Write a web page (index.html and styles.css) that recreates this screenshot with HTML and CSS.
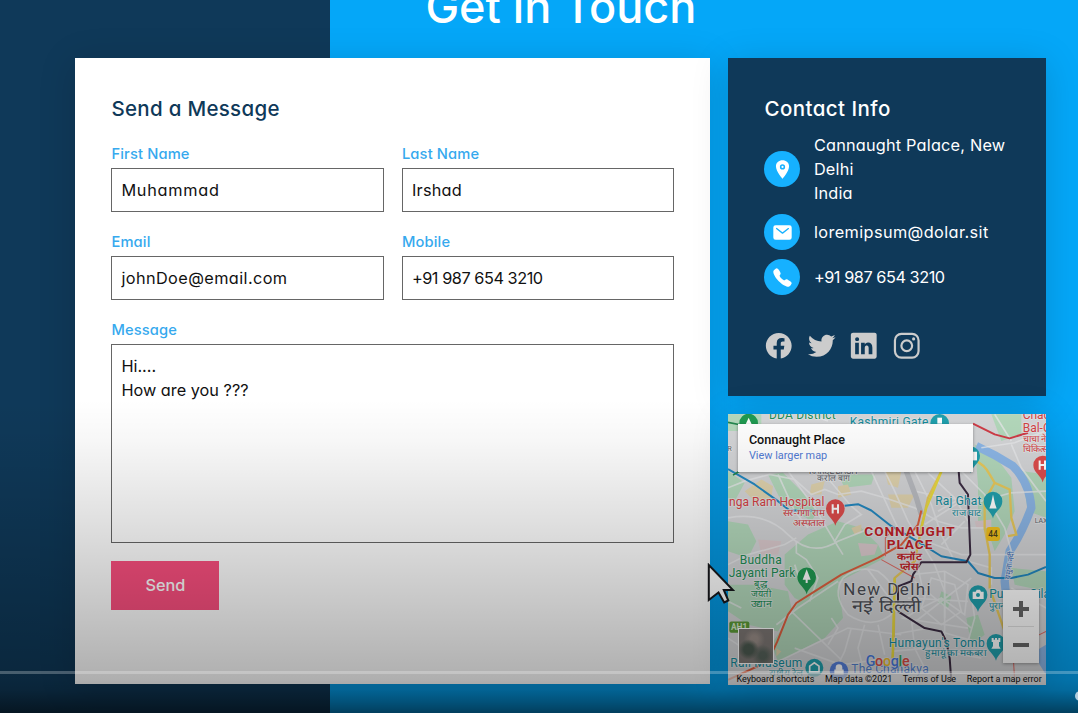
FILE: index.html
```html
<!DOCTYPE html>
<html lang="en">
<head>
<meta charset="utf-8">
<title>Get in Touch</title>
<link rel="stylesheet" href="styles.css">
</head>
<body>
<main class="page">
  <h1 class="title">Get in Touch</h1>
  <div class="columns">
    <form class="card form">
      <h2 class="heading form-heading">Send a Message</h2>
      <div class="fields">
        <label class="field"><span class="label">First Name</span><input class="input ls-first" type="text" value="Muhammad"></label>
        <label class="field"><span class="label">Last Name</span><input class="input ls-last" type="text" value="Irshad"></label>
        <label class="field"><span class="label">Email</span><input class="input ls-email" type="text" value="johnDoe@email.com"></label>
        <label class="field"><span class="label">Mobile</span><input class="input ls-phone" type="text" value="+91 987 654 3210"></label>
        <label class="field wide"><span class="label">Message</span><textarea class="input area">Hi....
How are you ???</textarea></label>
      </div>
      <button class="send" type="button">Send</button>
    </form>
    <div class="side">
      <section class="card info">
        <h2 class="heading info-heading">Contact Info</h2>
        <ul class="contacts">
          <li><span class="badge"><svg viewBox="0 0 512 512"><path d="M256 32C167.67 32 96 96.51 96 176c0 128 160 304 160 304s160-176 160-304c0-79.49-71.67-144-160-144zm0 224a64 64 0 1164-64 64.07 64.07 0 01-64 64z"/><circle cx="256" cy="192" r="26"/></svg></span><span class="address">Cannaught Palace, New<br>Delhi<br>India</span></li>
          <li><span class="badge"><svg viewBox="0 0 512 512"><path d="M424 80H88a56.06 56.06 0 00-56 56v240a56.06 56.06 0 0056 56h336a56.06 56.06 0 0056-56V136a56.06 56.06 0 00-56-56zm-14.18 92.63l-144 112a16 16 0 01-19.64 0l-144-112a16 16 0 1119.64-25.26L256 251.73l134.18-104.36a16 16 0 0119.64 25.26z"/></svg></span><span class="mail">loremipsum@dolar.sit</span></li>
          <li><span class="badge"><svg viewBox="0 0 512 512"><path d="M391 480c-19.52 0-46.94-7.06-88-30-49.93-28-88.55-53.85-138.21-103.38C116.91 298.77 93.61 267.79 61 208.45c-36.84-67-30.56-102.12-23.54-117.13C45.82 73.38 58.16 62.65 74.11 52a176.3 176.3 0 0128.64-15.2c1-.43 1.93-.84 2.76-1.21 4.95-2.23 12.45-5.6 21.95-2 6.34 2.38 12 7.25 20.86 16 18.17 17.92 43 57.83 52.16 77.43 6.15 13.21 10.22 21.93 10.23 31.71 0 11.45-5.76 20.28-12.75 29.81-1.31 1.79-2.61 3.5-3.87 5.16-7.61 10-9.28 12.89-8.18 18.05 2.23 10.37 18.86 41.24 46.19 68.51s57.31 42.85 67.72 45.07c5.38 1.15 8.33-.59 18.65-8.47 1.48-1.13 3-2.3 4.59-3.47 10.66-7.93 19.08-13.54 30.26-13.54h.06c9.73 0 18.06 4.22 31.86 11.18 18 9.08 59.11 33.59 77.14 51.78 8.77 8.84 13.66 14.48 16.05 20.81 3.6 9.53.21 17-2 22-.37.83-.78 1.74-1.21 2.75a176.49 176.49 0 01-15.29 28.58c-10.63 15.9-21.4 28.21-39.38 36.58A67.42 67.42 0 01391 480z"/></svg></span><span class="phone">+91 987 654 3210</span></li>
        </ul>
        <nav class="social">
          <svg viewBox="0 0 512 512"><path d="M480 257.35c0-123.7-100.3-224-224-224s-224 100.3-224 224c0 111.8 81.9 204.47 189 221.29V322.12h-56.89v-64.77H221V208c0-56.13 33.45-87.16 84.61-87.16 24.51 0 50.15 4.38 50.15 4.38v55.13H327.5c-27.81 0-36.51 17.26-36.51 35v42h62.12l-9.92 64.77H291v156.54c107.1-16.81 189-109.48 189-221.31z"/></svg>
          <svg viewBox="0 0 512 512"><path d="M496 109.5a201.8 201.8 0 01-56.55 15.3 97.51 97.51 0 0043.33-53.6 197.74 197.74 0 01-62.56 23.5A99.14 99.14 0 00348.31 64c-54.42 0-98.46 43.4-98.46 96.9a93.21 93.21 0 002.54 22.1 280.7 280.7 0 01-203-101.3A95.69 95.69 0 0036 130.4c0 33.6 17.53 63.3 44 80.7A97.5 97.5 0 0135.22 199v1.2c0 47 34 86.1 79 95a100.76 100.76 0 01-25.94 3.4 94.38 94.38 0 01-18.51-1.8c12.51 38.5 48.92 66.5 92.05 67.3A199.59 199.59 0 0139.5 405.6a203 203 0 01-23.5-1.4A278.68 278.68 0 00166.74 448c181.36 0 280.44-147.7 280.44-275.8 0-4.2-.11-8.4-.31-12.5A198.48 198.48 0 00496 109.5z"/></svg>
          <svg viewBox="0 0 512 512"><path d="M444.17 32H70.28C49.85 32 32 46.7 32 66.89v374.72C32 461.91 49.85 480 70.28 480h373.78c20.54 0 35.94-18.21 35.94-38.39V66.89C480.12 46.7 464.6 32 444.17 32zm-273.3 373.43h-64.18V205.88h64.18zM141 175.54h-.46c-20.54 0-33.84-15.29-33.84-34.43 0-19.49 13.65-34.42 34.65-34.42s33.85 14.82 34.31 34.42c-.01 19.14-13.31 34.43-34.66 34.43zm264.43 229.89h-64.18V296.32c0-26.14-9.34-44-32.56-44-17.74 0-28.24 12-32.91 23.69-1.75 4.2-2.22 9.92-2.22 15.76v113.66h-64.18V205.88h64.18v27.77c9.34-13.3 23.93-32.44 57.88-32.44 42.13 0 74 27.77 74 87.64z"/></svg>
          <svg viewBox="0 0 512 512"><rect class="ring" x="51" y="51" width="410" height="410" rx="112"/><circle class="ring" cx="256" cy="256" r="93"/><circle cx="375" cy="137" r="27"/></svg>
        </nav>
      </section>
      <section class="card map">
        <svg class="map-art" viewBox="0 9 954 810" preserveAspectRatio="none">
          <rect width="954" height="830" fill="#d4d5d7"/>
          <g fill="#b3d8bb">
            <path d="M0 180L50 215 20 270 0 260zM120 190L165 185 230 250 270 300 250 330 160 270zM0 330L60 340 85 390 60 440 0 420zM170 430L240 370 330 330 400 350 450 400 470 440 220 570 200 560 170 520zM130 700L210 575 330 510 345 620 290 680 150 750zM0 520L80 520 180 540 190 590 150 660 60 640 0 600z"/>
            <path d="M740 100L790 120 850 200 860 300 830 370 800 420 790 390 750 330 750 220zM880 180L954 190 954 320 900 300zM640 540L670 555 660 590 630 575zM715 620L750 610 770 670 730 700zM850 470L954 480 954 540 860 520zM330 190L440 190 430 220 350 230zM0 10H100V60H0zM790 10H880V70L820 90z"/>
          </g>
          <g fill="#e0d3ae"><path d="M50 240L100 205 135 225 130 260 80 270zM250 220L290 210 280 250 245 250zM330 225L360 220 370 250 330 260zM470 175L520 180 510 230 480 220zM480 250L560 250 540 290 490 290zM145 710L160 720 145 735zM370 350L400 340 400 365 380 370z"/></g>
          <g fill="#dccbce"><path d="M90 385L160 390 150 430 100 430zM390 395L450 400 440 430 400 435zM740 330L790 325 790 350 745 350z"/></g>
          <path d="M745 105Q800 130 855 165Q905 215 910 290Q880 370 845 420L830 510L835 560" fill="none" stroke="#8cb6e6" stroke-width="25"/>
          <path d="M920 720L954 700V790L935 760z" fill="#8cb6e6"/>
          <g class="streets">
            <path d="M0 230L50 210 125 190 200 205 250 250 290 235 330 250 400 240 470 260 560 290 630 330 700 350 770 350"/>
            <path d="M0 320Q110 300 180 370T330 390L430 350 500 360 620 400 700 430H954"/>
            <path d="M290 190L370 285 400 310 350 340 320 390 345 430"/><path d="M180 180L260 290 320 390"/><path d="M430 180L500 330 570 470 590 560"/>
            <path d="M470 180L500 240 540 330 620 460 650 540 650 620"/><path d="M150 190L200 300 240 350"/><path d="M0 460L60 430 170 400 205 380"/>
            <path d="M205 390L205 425 235 445 270 500 245 570"/><path d="M200 460L210 490 250 480"/>
            <path d="M540 180L560 240 650 260 760 270 850 245 954 240"/><path d="M560 180L610 280 640 370 680 450"/><path d="M600 185L680 260 720 330"/><path d="M630 300L720 250M590 340L700 270M640 400L710 330"/>
            <path d="M345 500Q310 550 360 610Q440 660 500 600Q520 530 450 480Q390 460 345 500"/>
            <path d="M420 475L530 620 580 590 640 560 710 610 720 520 650 480 550 490"/>
            <path d="M650 480V720M560 510L730 650M540 560L720 570M550 640L730 500M520 620L720 650"/>
            <path d="M610 500L580 590 640 640 700 600 680 520z"/>
            <path d="M190 600L340 745M150 750L360 650 520 670M200 710L340 760 480 740M300 700L330 650 310 620M370 650L350 720 310 800M410 640L390 710 410 790M450 640L470 730M145 640L210 590 330 510"/>
            <path d="M490 670L600 650 740 690M490 720L600 710 760 740M550 620L560 710 600 790M720 690L740 620 730 550"/>
            <path d="M760 110L860 95 954 60M850 100L880 170 954 270M770 250L830 350 850 420M800 10L850 90M700 180L770 250M0 680L45 710M240 10L300 30"/>
            <path d="M850 530L954 590M720 450L790 470 790 520M0 570L40 590"/>
          </g>
          <path d="M535 180L565 260 580 310" fill="none" stroke="#b9bbc0" stroke-width="16"/>
          <path d="M645 170L600 260 580 350 560 450 500 500 497 690 494 740M735 145Q770 160 785 190L800 215 845 235 850 320 865 370 840 375M800 215L770 270 770 350 785 430 785 530 830 660 830 720" fill="none" stroke="#e8c95c" stroke-width="7"/>
          <path d="M645 170L620 230 595 290 580 350M500 500L497 610 494 740" fill="none" stroke="#eadb3e" stroke-width="7"/>
          <g fill="none" stroke-width="6" stroke-linejoin="round">
            <path d="M0 174L80 220 150 270 185 298 280 298M350 284L390 279 430 298 490 345 560 385 640 435 720 450 750 485 800 500H850L900 490 954 467" stroke="#2388c0"/>
            <path d="M0 805L120 750 148 690 180 610 205 575 260 540 340 490 450 440 520 400 570 340 580 298" stroke="#e0603f"/>
            <path d="M735 38L800 70 845 82 900 65" stroke="#cf3b46"/>
            <path d="M472 435V380L500 350M460 445L560 500M855 720L860 810M930 672L954 660" stroke="#e06a62" stroke-width="3"/>
            <path d="M692 180L695 215 720 250 727 430 715 453 580 453 555 490 550 510 510 525V575M510 600L590 650 640 660 655 690 665 740 670 810" stroke="#3b2c42"/>
            <path d="M0 34L40 42M15 192L38 178" stroke="#23864d" stroke-width="5"/>
          </g>
          <defs><path id="pin" d="M0 44C-5 22-28 15-28-8A28 28 0 0128-8C28 15 5 22 0 44z"/></defs>
          <g>
            <use href="#pin" x="62" y="44" fill="#209a51"/><path d="M62 20L72 42H52z" fill="#fff"/>
            <use href="#pin" x="635" y="45" fill="#20a0ad"/><path d="M628 20h14v18h-14z" fill="#fff"/>
            <use href="#pin" x="728" y="142" fill="#20a0ad"/><path d="M735 122h12v26h-12z" fill="#fff"/>
            <use href="#pin" x="322" y="300" fill="#dd4c4c"/><path d="M314 279v28M330 279v28M314 293h16" stroke="#fff" stroke-width="6"/>
            <use href="#pin" x="944" y="170" fill="#dd4c4c"/><path d="M935 148v28M951 148v28M935 162h16" stroke="#fff" stroke-width="6"/>
            <use href="#pin" x="236" y="505" fill="#209a51"/><path d="M236 474l12 31h-9v10h-6v-10h-9z" fill="#fff"/>
            <use href="#pin" x="795" y="278" fill="#20a0ad"/><path d="M795 250l6 28 5 14h-22l5-14z" fill="#fff"/>
            <use href="#pin" x="750" y="558" fill="#20a0ad"/><path d="M734 541h9l3-6h10l3 6h8v22h-33z" fill="#fff"/><circle cx="750" cy="551" r="6" fill="#20a0ad"/>
            <use href="#pin" x="804" y="704" fill="#20a0ad"/><path d="M791 680h6v5h4v-5h6v5h4v-5h6v12h-4v12l5 8h-28l5-8v-12h-4z" fill="#fff"/>
            <circle cx="259" cy="769" r="27" fill="#20a0ad"/><path d="M245 764l14-10 14 10v17h-28z" fill="none" stroke="#fff" stroke-width="5"/>
            <circle cx="333" cy="778" r="28" fill="#5680dc"/><path d="M323 774v-6a10 10 0 0120 0v6h4v16h-28v-16z" fill="#fff"/>
            <rect x="775" y="347" width="41" height="42" rx="9" fill="#f3c11d"/><rect x="4" y="630" width="60" height="34" rx="6" fill="#5c9b37"/>
          </g>
          <g class="place">
            <g fill="#208d54" font-size="36"><text x="123" y="24" textLength="200">DDA District</text><text x="35" y="458" textLength="126">Buddha</text><text x="2" y="497" textLength="200">Jayanti Park</text><g font-size="29"><text x="78" y="528" textLength="40" lengthAdjust="spacingAndGlyphs">बुद्ध</text><text x="69" y="557" textLength="62" lengthAdjust="spacingAndGlyphs">जयंती</text><text x="69" y="586" textLength="62" lengthAdjust="spacingAndGlyphs">उद्यान</text></g></g>
            <g fill="#148c9c" font-size="36"><text x="365" y="46" textLength="236">Kashmiri Gate</text><text x="622" y="282" textLength="138">Raj Ghat</text><text x="673" y="313" font-size="28" textLength="88" lengthAdjust="spacingAndGlyphs">राज घाट</text><text x="784" y="560" textLength="182">Purana Qila</text><text x="784" y="593" font-size="28">पुराना</text><text x="482" y="707" textLength="288">Humayun's Tomb</text><text x="592" y="735" font-size="28" textLength="182" lengthAdjust="spacingAndGlyphs">हुमायूं का मकबरा</text><text x="7" y="767" textLength="216">Rail Museum</text><text x="122" y="793" font-size="27" textLength="104" lengthAdjust="spacingAndGlyphs">राष्ट्रीय रेल</text></g>
            <g fill="#d43f43" font-size="36"><text x="3" y="285" textLength="286">nga Ram Hospital</text><text x="165" y="315" font-size="28" textLength="126" lengthAdjust="spacingAndGlyphs">सर-गंगा राम</text><text x="195" y="345" font-size="28" textLength="95" lengthAdjust="spacingAndGlyphs">अस्पताल</text><text x="884" y="25">Chacha</text><text x="884" y="62">Bal-Chi</text><text x="884" y="94" font-size="28">चाचा नेहरू</text><text x="884" y="123" font-size="28">चिकित्सा</text></g>
            <g fill="#60646b" font-size="26"><text x="243" y="189" textLength="145">KAROL BAGH</text><text x="267" y="210" textLength="99" lengthAdjust="spacingAndGlyphs">करोल बाग</text><text x="920" y="335" font-size="21">LAXMI</text></g>
            <text x="-2" y="120" font-size="22" fill="#666">R</text>
            <g fill="#c02127" font-weight="700" font-size="41"><text x="409" y="373" textLength="271">CONNAUGHT</text><text x="476" y="414" textLength="137">PLACE</text><g font-size="29"><text x="508" y="446" textLength="73" lengthAdjust="spacingAndGlyphs">कनॉट</text><text x="516" y="477" textLength="58" lengthAdjust="spacingAndGlyphs">प्लेस</text></g></g>
            <g fill="#4b4d54"><text x="346" y="550" font-size="51" textLength="262">New Delhi</text><text x="372" y="602" font-size="52" font-weight="500" textLength="207" lengthAdjust="spacingAndGlyphs">नई दिल्ली</text></g>
            <text x="370" y="786" font-size="36" fill="#5381ce" textLength="232">The Chanakya</text>
            <text x="0" y="0" font-size="24" fill="#4775b9" transform="translate(845 505) rotate(-80)">यमुना नदी</text>
          </g>
          <text x="781" y="378" font-size="25" font-weight="500" fill="#4a421e">44</text><text x="9" y="656" font-size="25" font-weight="700" fill="#d9ebcf">AH1</text>
          <text x="413" y="763" font-size="43" font-weight="500" class="google" textLength="132"><tspan fill="#4779dd">G</tspan><tspan fill="#dc4b43">o</tspan><tspan fill="#edbd2b">o</tspan><tspan fill="#4779dd">g</tspan><tspan fill="#36a358">l</tspan><tspan fill="#dc4b43">e</tspan></text>
        </svg>
        <div class="place-card"><strong>Connaught Place</strong><span>View larger map</span></div>
        <div class="satellite"></div>
        <div class="zoom"><span class="plus"></span><span class="minus"></span></div>
        <div class="credits"><span>Keyboard shortcuts</span><span>Map data ©2021</span><span>Terms of Use</span><span>Report a map error</span></div>
      </section>
    </div>
  </div>
</main>
<svg class="cursor" viewBox="0 0 28 42"><path d="M1.8 2V37L11.5 29.5 17.2 39.5 21.3 37.5 16.8 27H26z" fill="#fff" stroke="#17181c" stroke-width="2"/></svg>
<div class="shade"></div>
<div class="progress"></div>
<div class="knob"></div>
</body>
</html>
```

FILE: styles.css
```css
* { box-sizing: border-box; margin: 0; padding: 0; }
body {
  position: relative;
  height: 713px;
  overflow: hidden;
  font: 16.3px/24px Inter, "Open Sans", sans-serif;
  font-feature-settings: "cv11";
  background: linear-gradient(90deg, #0f3959 330.5px, #05a7f8 330.5px);
}
.page { width: 971px; margin-left: 75.4px; }
.title {
  height: 58.4px;
  line-height: 14px;
  text-align: center;
  font-size: 45px;
  font-weight: 550;
  letter-spacing: 0;
  color: #fff;
}
.columns { display: grid; grid-template-columns: 635px 318px; gap: 18px; }
.card { box-shadow: 0 5px 35px rgba(0,0,0,.15); }
.form { height: 626px; padding: 36px; background: #fff; }
.heading { font-size: 20.5px; line-height: 30px; font-weight: 500; color: #fff; }
.form-heading { color: #0f3959; font-weight: 450; letter-spacing: .3px; }
.info-heading { letter-spacing: .45px; }
.fields { display: grid; grid-template-columns: 1fr 1fr; gap: 18px; margin-top: 18px; }
.field { display: flex; flex-direction: column; gap: 2px; }
.wide { grid-column: 1 / -1; }
.label { font-size: 14.7px; font-weight: 500; letter-spacing: .15px; color: #36a9ee; }
.input {
  width: 100%;
  height: 44px;
  padding: 0 9px;
  border: 1px solid #666;
  border-radius: 0;
  outline: 0;
  background: transparent;
  font: inherit;
  font-feature-settings: inherit;
  color: #111;
}
.ls-first { letter-spacing: .75px; }
.ls-last { letter-spacing: .25px; }
.ls-email { letter-spacing: .4px; }
.ls-phone, .phone { letter-spacing: -.45px; }
.address { letter-spacing: .2px; }
.mail { letter-spacing: .4px; }
.area { height: 199px; padding-top: 9px; resize: none; }
.send {
  display: block;
  width: 108px;
  height: 49px;
  margin-top: 17.5px;
  border: 0;
  background: #fb4f7f;
  color: #fff;
  font: 500 16.3px/24px Inter, sans-serif;
}
.side { display: flex; flex-direction: column; gap: 18px; }
.info { height: 338px; padding: 36px; background: #0f3959; color: #fff; }
.contacts { display: flex; flex-direction: column; gap: 9px; margin-top: 9px; list-style: none; }
.contacts li { display: flex; align-items: center; gap: 13.5px; white-space: nowrap; }
.badge { display: flex; align-items: center; justify-content: center; width: 36px; height: 36px; border-radius: 50%; background: #16b1ff; }
.badge svg { width: 21px; height: 21px; fill: #fff; }
.social { display: flex; gap: 13px; margin-top: 36px; }
.social svg { width: 29.5px; height: 29.5px; fill: #ccc; }
.social .ring { fill: none; stroke: #ccc; stroke-width: 38; }
.map { position: relative; height: 270.5px; overflow: hidden; font-family: Roboto, sans-serif; }
.map-art { display: block; width: 318px; height: 270.5px; }
.streets { fill: none; stroke: #e8e9eb; stroke-width: 5; opacity: .75; }
.place { stroke: rgba(230,231,233,.75); stroke-width: 5; paint-order: stroke; stroke-linejoin: round; }
.google { stroke: #e4e4e4; stroke-width: 3; paint-order: stroke; }
.place-card {
  position: absolute; left: 9.5px; top: 9.5px; width: 235px; height: 48px;
  display: flex; flex-direction: column; padding: 8px 11px;
  background: #fff; box-shadow: 0 1px 3px rgba(0,0,0,.35);
  line-height: 16px; color: #111;
}
.place-card strong { font-size: 12.6px; font-weight: 500; }
.place-card span { font-size: 10.9px; color: #527bd5; }
.satellite {
  position: absolute; left: 10px; top: 214px; width: 36px; height: 36px;
  border: 1.5px solid #fff;
  background: radial-gradient(circle at 28% 60%, #4c5a50 0 15%, transparent 32%), radial-gradient(circle at 70% 78%, #56625a 0 10%, transparent 30%), radial-gradient(circle at 45% 30%, #9a8e88 0 12%, transparent 35%), #7d7774;
}
.zoom { position: absolute; left: 274.5px; top: 176px; width: 36px; height: 73px; display: grid; grid-template-rows: 1fr 1fr; place-items: center; background: linear-gradient(#e2e2e2, #e2e2e2) center / 26px 1px no-repeat #fff; box-shadow: 0 1px 3px rgba(0,0,0,.3); }
.plus, .minus { width: 16px; height: 16px; background: linear-gradient(#666, #666) center / 16px 4px no-repeat; }
.plus { background: linear-gradient(#666, #666) center / 16px 4px no-repeat, linear-gradient(#666, #666) center / 4px 16px no-repeat; }
.credits { position: absolute; left: 0; right: 0; bottom: 0; height: 12px; display: flex; gap: 10.5px; padding-left: 8px; background: rgba(245,245,245,.65); font-size: 9px; line-height: 12px; color: #111; white-space: nowrap; }
.cursor { position: absolute; left: 707px; top: 563px; width: 28px; height: 42px; }
.shade {
  position: absolute; left: 0; right: 0; top: 400px; bottom: 0;
  background: linear-gradient(rgba(0,0,0,0), rgba(0,0,0,.03) 40px, rgba(0,0,0,.12) 120px, rgba(0,0,0,.215) 200px, rgba(0,0,0,.315) 280px, rgba(0,0,0,.36) 290px, rgba(0,0,0,.62));
}
.progress { position: absolute; left: 0; right: 0; top: 671px; height: 3px; background: rgba(255,255,255,.25); }
.knob { position: absolute; left: 1075px; top: 691px; width: 10px; height: 10px; border-radius: 50%; background: #b3cede; }
```
